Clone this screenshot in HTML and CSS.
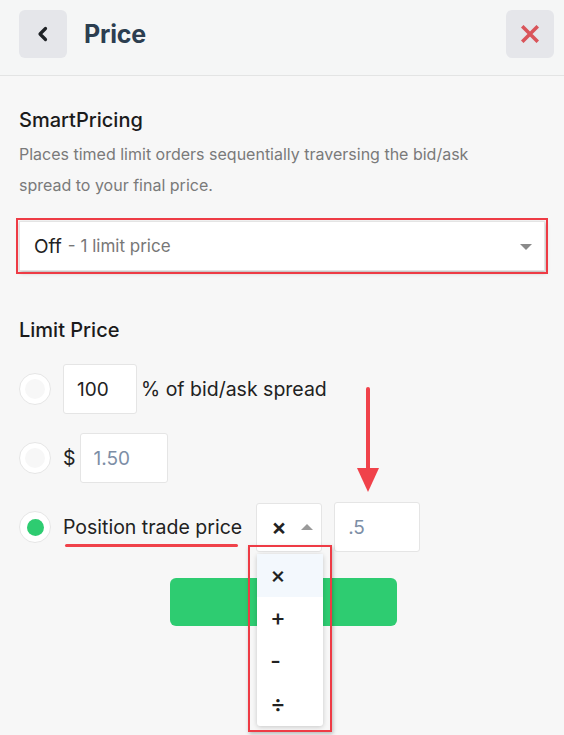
FILE: index.html
```
<!doctype html>
<html>
<head>
    <title>Price</title>
    <meta charset="utf-8" />
    <meta name="viewport" content="width=device-width, initial-scale=1" />
    <link rel="stylesheet" href="styles.css">
</head>
<body>

<header class="top-bar">
    <button class="icon-btn back" type="button">
        <svg width="14" height="16" viewBox="0 0 14 16"><path d="M9.5 2.5 L4 8 L9.5 13.5" fill="none" stroke="#1f2226" stroke-width="3.2" stroke-linecap="round" stroke-linejoin="round"/></svg>
    </button>
    <h1>Price</h1>
    <button class="icon-btn close" type="button">
        <svg width="18" height="18" viewBox="0 0 18 18"><path d="M2.5 2.5 L15.5 15.5 M15.5 2.5 L2.5 15.5" fill="none" stroke="#d9545a" stroke-width="3.6" stroke-linecap="square"/></svg>
    </button>
</header>

<main class="panel">

    <section class="smart">
        <h2>SmartPricing</h2>
        <p class="hint">Places timed limit orders sequentially traversing the bid/ask spread to your final price.</p>
        <div class="select-box marked">
            <span class="sel-main">Off</span>
            <span class="sel-sub">- 1 limit price</span>
            <span class="caret down"></span>
        </div>
    </section>

    <section class="limit">
        <h2>Limit Price</h2>

        <div class="option-row">
            <span class="radio"></span>
            <input class="field w-pct" type="text" value="100">
            <span class="opt-label">% of bid/ask spread</span>
        </div>

        <div class="option-row">
            <span class="radio"></span>
            <span class="opt-label dollar">$</span>
            <input class="field w-usd muted" type="text" value="1.50">
        </div>

        <div class="option-row">
            <span class="radio on"></span>
            <span class="opt-label underlined">Position trade price</span>
            <div class="op-select">
                <span class="op-value">&times;</span>
                <span class="caret up"></span>
                <ul class="op-menu">
                    <li class="active">&times;</li>
                    <li>+</li>
                    <li>-</li>
                    <li>&divide;</li>
                </ul>
                <div class="mark-frame"></div>
            </div>
            <div class="arrow-wrap">
                <input class="field w-num muted" type="text" value=".5">
                <svg class="pointer" width="24" height="106" viewBox="0 0 24 106">
                    <line x1="12" y1="2" x2="12" y2="84" stroke="#f0424a" stroke-width="4" stroke-linecap="round"/>
                    <polygon points="1,81 23,81 12,105" fill="#f0424a"/>
                </svg>
            </div>
        </div>

        <div class="submit-row">
            <button class="submit" type="button"></button>
        </div>
    </section>

</main>

</body>
</html>
```

FILE: styles.css
```
body{
    margin:0;
    min-height:735px;
    background:#f7f7f7;
    font-family:Inter, "Noto Sans", sans-serif;
    color:#222;
}

.top-bar{
    display:flex;
    align-items:center;
    height:48px;
    padding:10px 10px 17px 19px;
    background:#f5f6f6;
    border-bottom:1px solid #e3e4e4;
}

.top-bar h1{
    flex:1;
    margin:0 0 0 17px;
    font-size:25px;
    font-weight:700;
    color:#2c3e50;
    letter-spacing:-0.2px;
}

.icon-btn{
    display:flex;
    align-items:center;
    justify-content:center;
    width:48px;
    height:48px;
    padding:0;
    border:none;
    border-radius:6px;
    background:#e5e6ea;
}

.panel{
    padding:32px 19px 0 19px;
}

h2{
    margin:0;
    font-size:20px;
    line-height:24px;
    font-weight:500;
    color:#1b1b1b;
}

.hint{
    max-width:480px;
    margin:7px 0 0 0;
    font-size:16px;
    line-height:31px;
    color:#7a7a7a;
}

.select-box{
    position:relative;
    display:flex;
    align-items:center;
    height:48px;
    margin-top:20px;
    padding:0 14px;
    background:#fff;
    border:1px solid #e4e4e4;
}

.marked{
    outline:2px solid #ee3b45;
    outline-offset:1px;
    box-shadow:1px 2px 4px rgba(0,0,0,0.25);
}

.sel-main{
    font-size:19px;
    margin-right:6px;
}

.sel-sub{
    font-size:17px;
    color:#777;
}

.caret{
    width:0;
    height:0;
    border-left:6px solid transparent;
    border-right:6px solid transparent;
}

.caret.down{
    position:absolute;
    right:12px;
    top:22px;
    border-top:6px solid #8a8a8a;
}

.caret.up{
    border-bottom:6px solid #9a9a9a;
}

.limit{
    margin-top:47px;
}

.limit h2{
    margin-bottom:22px;
}

.option-row{
    display:flex;
    align-items:center;
    gap:12px;
    height:50px;
    margin-bottom:19px;
}

.radio{
    display:flex;
    align-items:center;
    justify-content:center;
    width:30px;
    height:30px;
    border:1px solid #e6e6e6;
    border-radius:50%;
    background:#fff;
}

.radio::after{
    content:"";
    width:20px;
    height:20px;
    border-radius:50%;
    background:#f7f7f7;
}

.radio.on::after{
    width:17px;
    height:17px;
    background:#2ecc71;
}

.field{
    box-sizing:border-box;
    height:50px;
    padding:0 13px;
    border:1px solid #e5e5e5;
    border-radius:3px;
    background:#fff;
    font-family:inherit;
    font-size:19px;
    color:#222;
}

.w-pct{ width:74px; }
.w-usd{ width:88px; margin-left:-8px; }
.w-num{ width:86px; }

.muted{ color:#7d8ea6; }

.opt-label{
    font-size:19.5px;
    margin-left:-8px;
}

.opt-label.dollar{
    margin-left:0;
}

.underlined{
    position:relative;
    margin-left:0;
}

.underlined::after{
    content:"";
    position:absolute;
    left:2px;
    right:4px;
    bottom:-8px;
    height:3px;
    border-radius:2px;
    background:#f0424a;
}

.op-select{
    position:relative;
    box-sizing:border-box;
    display:flex;
    align-items:center;
    gap:14px;
    width:66px;
    height:49px;
    padding:0 0 0 14px;
    margin-left:2px;
    background:#fff;
    border:1px solid #e5e5e5;
    border-radius:3px;
}

.op-value{
    font-size:23px;
    font-weight:600;
}

.op-menu{
    position:absolute;
    z-index:2;
    top:50px;
    left:0;
    width:66px;
    margin:0;
    padding:0;
    list-style:none;
    background:#fff;
    border-radius:3px;
    box-shadow:0 1px 5px rgba(0,0,0,0.2);
}

.op-menu li{
    height:43px;
    line-height:43px;
    padding-left:13px;
    font-size:23px;
    font-weight:500;
}

.op-menu li.active{
    background:#f3f8fd;
}

.mark-frame{
    position:absolute;
    z-index:3;
    top:41px;
    left:-9px;
    width:80px;
    height:183px;
    border:2px solid #ee3b45;
    box-shadow:1px 2px 4px rgba(0,0,0,0.25);
}

.arrow-wrap{
    position:relative;
}

.pointer{
    position:absolute;
    left:22px;
    bottom:59px;
}

.submit-row{
    display:flex;
    justify-content:center;
    margin-top:26px;
}

.submit{
    width:227px;
    height:48px;
    border:none;
    border-radius:6px;
    background:#2ecc71;
    margin-left:2px;
}
```
